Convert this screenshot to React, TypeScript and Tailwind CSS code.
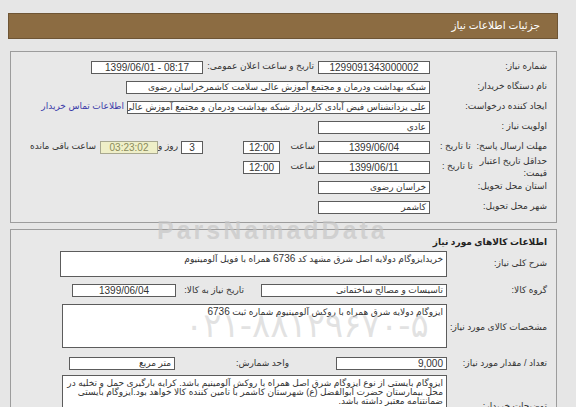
import React from 'react';

const box = "h-[13px] border border-[#5c5c5c] bg-white px-[3px] leading-[11px] overflow-hidden whitespace-nowrap shrink-0";
const num = "text-[10px]";

const Row: React.FC<{ label: React.ReactNode; children?: React.ReactNode }> = ({ label, children }) => (
  <div className="flex h-[20px] items-center">
    <div className="w-[126px] shrink-0 pr-[9px] whitespace-nowrap">{label}</div>
    {children}
  </div>
);

export default function App() {
  return (
    <div
      dir="rtl"
      className="relative w-[576px] h-[407px] overflow-hidden bg-[#e6e6e6] text-[9px] text-[#333] font-['Liberation_Sans','DejaVu_Sans',sans-serif]"
    >
      {/* header */}
      <div className="pt-[13px]">
        <div className="mr-[18px] w-[550px] h-[26px] bg-[#8c6c42] border border-[#6e5535] flex items-center pr-[17px] text-[10.5px] text-white">
          جزئیات اطلاعات نیاز
        </div>
      </div>

      {/* panel 1 */}
      <div className="mt-[12px] mr-[19px] w-[547px] h-[172px] border border-[#9c9c9c] bg-[#e8e8e8] pt-[5px]">
        <Row label="شماره نیاز:">
          <div dir="ltr" className={box + " " + num + " w-[112px] text-center"}>1299091343000002</div>
          <div className="mr-[4px] w-[108px] whitespace-nowrap">تاریخ و ساعت اعلان عمومی:</div>
          <div dir="ltr" className={box + " " + num + " mr-[3px] w-[112px] text-center"}>1399/06/01 - 08:17</div>
        </Row>
        <Row label="نام دستگاه خریدار:">
          <div className={box + " w-[304px]"}>شبکه بهداشت ودرمان و مجتمع آموزش عالی سلامت کاشمرخراسان رضوی</div>
        </Row>
        <Row label="ایجاد کننده درخواست:">
          <div className={box + " w-[303px]"}>علی یزدانشناس فیض آبادی کارپرداز شبکه بهداشت ودرمان و مجتمع آموزش عالی سلامت کاشمر</div>
          <div className="mr-[3px] whitespace-nowrap text-[#3a3aa8]">اطلاعات تماس خریدار</div>
        </Row>
        <Row label="اولویت نیاز :">
          <div className={box + " w-[112px]"}>عادي</div>
        </Row>
        <div className="flex h-[20px] items-center">
          <div className="w-[126px] shrink-0 pr-[9px] pl-[10px] flex items-center justify-between whitespace-nowrap">
            <span>مهلت ارسال پاسخ:</span>
            <span>تا تاریخ :</span>
          </div>
          <div dir="ltr" className={box + " " + num + " w-[112px] text-center"}>1399/06/04</div>
          <div className="mr-[3px] w-[25px]">ساعت</div>
          <div dir="ltr" className={box + " " + num + " mr-[10px] w-[37px] text-center"}>12:00</div>
          <div dir="ltr" className={box + " " + num + " mr-[40px] w-[22px] text-center"}>3</div>
          <div className="mr-[3px] w-[16px] whitespace-nowrap">روز و</div>
          <div dir="ltr" className="h-[13px] mr-[4px] w-[58px] border border-[#a8a890] bg-[#efefc8] text-[10px] text-[#8a8a5c] leading-[11px] text-center shrink-0">03:23:02</div>
          <div className="mr-[4px] whitespace-nowrap">ساعت باقی مانده</div>
        </div>
        <div className="flex h-[20px] items-center">
          <div className="w-[126px] shrink-0 pr-[9px] pl-[12px] flex items-center justify-between whitespace-nowrap">
            <span className="leading-[12px]">حداقل تاریخ اعتبار<br />قیمت:</span>
            <span>تا تاریخ :</span>
          </div>
          <div dir="ltr" className={box + " " + num + " w-[112px] text-center"}>1399/06/11</div>
          <div className="mr-[3px] w-[25px]">ساعت</div>
          <div dir="ltr" className={box + " " + num + " mr-[10px] w-[37px] text-center"}>12:00</div>
        </div>
        <Row label="استان محل تحویل:">
          <div className={box + " w-[112px]"}>خراسان رضوی</div>
        </Row>
        <Row label="شهر محل تحویل:">
          <div className={box + " w-[112px]"}>کاشمر</div>
        </Row>
      </div>

      {/* panel 2 */}
      <div className="mt-[6px] mr-[19px] w-[547px] h-[200px] border border-[#9c9c9c] bg-[#e8e8e8] pt-[5px]">
        <div className="h-[16px] pr-[9px] flex items-center font-bold text-[#222]">اطلاعات کالاهای مورد نیاز</div>

        <div className="flex items-center">
          <div className="w-[109px] shrink-0 pr-[9px] whitespace-nowrap">شرح کلی نیاز:</div>
          <div className="h-[26px] w-[387px] border border-[#5c5c5c] bg-white px-[3px] pt-[1px] leading-[11px] whitespace-nowrap overflow-hidden">
            خریدایزوگام دولایه اصل شرق مشهد کد <span className={num}>6736</span> همراه با فویل آلومینیوم
          </div>
        </div>

        <div className="mt-[7px] flex items-center">
          <div className="w-[109px] shrink-0 pr-[9px] whitespace-nowrap">گروه کالا:</div>
          <div className={box + " w-[186px]"}>تاسیسات و مصالح ساختمانی</div>
          <div className="mr-[17px] w-[68px] whitespace-nowrap">تاریخ نیاز به کالا:</div>
          <div dir="ltr" className={box + " " + num + " w-[104px] text-center"}>1399/06/04</div>
        </div>

        <div className="mt-[6px] flex items-center">
          <div className="w-[109px] shrink-0 pr-[9px] pt-[4px] whitespace-nowrap">مشخصات کالای مورد نیاز:</div>
          <div className="h-[44px] w-[385px] border border-[#5c5c5c] bg-white px-[3px] pt-[1px] leading-[11px] whitespace-nowrap overflow-hidden">
            ایزوگام دولایه شرق همراه با روکش آلومینیوم شماره ثبت <span className={num}>6736</span>
          </div>
        </div>

        <div className="mt-[9px] flex items-center">
          <div className="w-[109px] shrink-0 pr-[9px] whitespace-nowrap">تعداد / مقدار مورد نیاز:</div>
          <div dir="ltr" className={box + " " + num + " w-[111px] text-right"}>9,000</div>
          <div className="mr-[47px] w-[114px] whitespace-nowrap">واحد شمارش:</div>
          <div className={box + " w-[106px]"}>متر مربع</div>
        </div>

        <div className="mt-[5px] flex items-start">
          <div className="w-[109px] shrink-0 pr-[9px] pt-[25px] whitespace-nowrap">توضیحات خریدار:</div>
          <div className="h-[60px] w-[385px] border border-[#5c5c5c] bg-white px-[3px] pt-[3px] leading-[9px]">
            ایزوگام بایستی از نوع ایزوگام شرق اصل همراه با روکش آلومینیم باشد. کرایه بارگیری حمل و تخلیه در محل بیمارستان حضرت ابوالفضل (ع) شهرستان کاشمر با تامین کننده کالا خواهد بود.ایزوگام بایستی ضمانتنامه معتبر داشته باشد.
          </div>
        </div>
      </div>

      {/* watermark */}
      <div dir="ltr" className="pointer-events-none absolute left-[157px] top-[212px] text-[25px] font-bold tracking-[3px] text-[#c6c6c6]/70 font-['Liberation_Sans',sans-serif]">
        ParsNamadData
      </div>
      <div dir="ltr" className="pointer-events-none absolute left-[185px] top-[300px] text-[34px] text-[#cfcfcf]/60 font-['DejaVu_Sans',sans-serif]">
        ۰۲۱-۸۸۱۲۹۶۷۰-۵
      </div>
    </div>
  );
}
